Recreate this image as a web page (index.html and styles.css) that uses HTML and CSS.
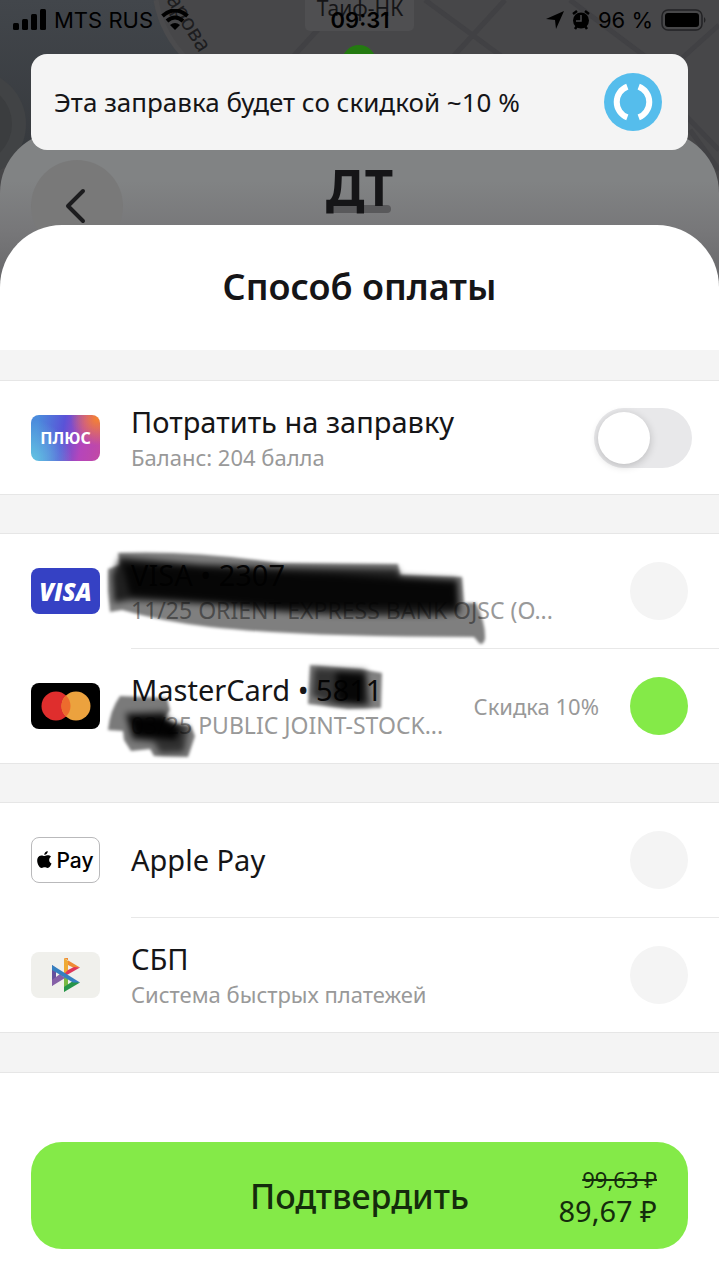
FILE: index.html
```html
<!DOCTYPE html>
<html lang="ru">
<head>
<meta charset="utf-8">
<meta name="viewport" content="width=device-width, initial-scale=1">
<title>Способ оплаты</title>
<link rel="stylesheet" href="styles.css">
</head>
<body>
<div class="screen">
  <div class="backdrop">
    <svg class="map" viewBox="0 0 719 300" preserveAspectRatio="xMidYMin slice" aria-hidden="true">
      <defs>
        <linearGradient id="water" x1="0" y1="0" x2="0" y2="1"><stop offset="0" stop-color="#42464b"/><stop offset="1" stop-color="#36393d"/></linearGradient>
      </defs>
      <rect width="719" height="300" fill="#474749"/>
      <path d="M0 0H156Q160 30 185 60L230 160H0Z" fill="url(#water)"/>
      <circle cx="-28" cy="124" r="54" fill="#414345"/>
      <circle cx="-28" cy="124" r="40" fill="#3b3d3f"/>
      <g fill="none" stroke="#414144" stroke-width="5">
        <path d="M345 0L290 60M425 0L520 70M505 0L450 60M570 0L650 60M719 25L680 60M680 110L719 150M690 130L719 170"/>
        <path d="M156 0Q162 35 188 60" stroke="#4b4b4d"/>
      </g>
      <rect x="305" y="-8" width="109" height="39" rx="5" fill="#4f4f51"/>
      <circle cx="359" cy="62" r="17" fill="#247a11"/>
      <text class="street" transform="translate(166 0) rotate(58)">арова</text>
      <text class="place" x="360" y="16" text-anchor="middle">Таиф-НК</text>
    </svg>
    <div class="previous">
      <div class="back"><svg viewBox="0 0 24 36" aria-hidden="true"><path d="M18 3L3 18L18 33"/></svg></div>
      <div class="fuel">ДТ</div>
    </div>
  </div>

  <header class="status">
    <div class="status-side">
      <svg class="signal" viewBox="0 0 33 22" aria-hidden="true"><rect y="14" width="6" height="7" rx="1.5"/><rect x="9" y="10" width="6" height="11" rx="1.5"/><rect x="18" y="5" width="6" height="16" rx="1.5"/><rect x="27" width="6" height="21" rx="1.5"/></svg>
      <span>MTS RUS</span>
      <svg class="wifi" viewBox="0 0 28 22" aria-hidden="true"><path d="M1.500 7Q14-4 26.500 7M6 12Q14 5 22 12" fill="none" stroke="#000" stroke-width="4"/><path d="M9 16Q14 12 19 16L14 21Z"/></svg>
    </div>
    <strong class="clock">09:31</strong>
    <div class="status-side status-end">
      <svg class="arrow" viewBox="0 0 18 18" aria-hidden="true"><path d="M18 0L10 18L9 9L0 8Z"/></svg>
      <svg class="alarm" viewBox="0 0 18 20" aria-hidden="true"><circle cx="9" cy="10.500" r="8"/><path d="M1 4L5 1M17 4L13 1M3 19L5 16M15 19L13 16" stroke="#000" stroke-width="2.500"/><path d="M9 5V11H4" fill="none" stroke="#4a4a4c" stroke-width="1.500"/></svg>
      <span>96 %</span>
      <svg class="battery" viewBox="0 0 46 22" aria-hidden="true"><rect x="1" y="1" width="40" height="20" rx="6" fill="none" stroke="#222224" stroke-width="1.500"/><rect x="4" y="4" width="34" height="14" rx="3"/><path d="M43 8Q46 11 43 14Z" fill="#222224"/></svg>
    </div>
  </header>

  <div class="toast">
    <p>Эта заправка будет со скидкой ~10 %</p>
    <svg viewBox="0 0 58 58" aria-hidden="true"><circle cx="29" cy="29" r="29" fill="#55bdec"/><path d="M23.300 13.600A16.500 16.500 0 0 0 23.300 44.400M34.700 13.600A16.500 16.500 0 0 1 34.700 44.400" fill="none" stroke="#fff" stroke-width="6"/></svg>
  </div>

  <form class="sheet">
    <h1>Способ оплаты</h1>

    <section class="group first">
      <label class="row plus-row">
        <span class="badge plus">ПЛЮС</span>
        <span class="body"><span class="name">Потратить на заправку</span><span class="note">Баланс: 204 балла</span></span>
        <input class="switch" type="checkbox" role="switch">
      </label>
    </section>

    <section class="group">
      <label class="row">
        <span class="badge visa">VISA</span>
        <span class="body"><span class="name">VISA • 2307</span><span class="note bank">11/25 ORIENT EXPRESS BANK OJSC (O...</span>
          <svg class="marker" viewBox="0 0 400 120" aria-hidden="true">
            <defs><filter id="soft"><feGaussianBlur stdDeviation="1.500"/></filter><filter id="softer"><feGaussianBlur stdDeviation="3"/></filter></defs>
            <path filter="url(#soft)" d="M18 14Q90 11 180 24L298 25L300 36L362 38L364 64L376 64Q386 85 385 100Q383 107 379 104L374 98Q200 98 110 88Q60 82 22 71L10 73L8 52L8 30L20 26Z" fill-opacity=".5"/>
            <g filter="url(#softer)">
              <path d="M20 18L100 25L180 28L298 30L300 37L358 40L360 74L340 76Q200 79 120 66L30 61L14 64L12 36Z" fill-opacity=".75"/>
              <path d="M22 24L140 32L240 36L356 44L357 68L180 68L60 58L30 56Z" fill-opacity=".8"/>
            </g>
          </svg>
        </span>
        <input class="radio" type="radio" name="method">
      </label>
      <label class="row">
        <span class="badge mastercard"><svg viewBox="0 0 50 30" aria-hidden="true"><circle cx="15" cy="15" r="14.500" fill="#df2e2d"/><circle cx="35" cy="15" r="14.500" fill="#eca23e"/><path d="M25 4.500A14.500 14.500 0 0 1 25 25.500A14.500 14.500 0 0 1 25 4.500Z" fill="#ed6b2d"/></svg></span>
        <span class="body"><span class="name">MasterCard • 5811</span><span class="note bank">03/25 PUBLIC JOINT-STOCK...</span>
          <svg class="marker" viewBox="0 0 400 120" aria-hidden="true">
            <g filter="url(#soft)">
              <path d="M210 11L260 15L282 19L281 54L248 55L208 50Z" fill-opacity=".5"/>
              <path d="M20 42L67 44L70 56L62 68L91 72L95 82L88 103L54 102L50 95L31 97L24 86L23 77L8 76Q10 56 20 42Z" fill-opacity=".52"/>
            </g>
            <g filter="url(#softer)">
              <path d="M214 14L266 16L270 52L232 50L212 42Z" fill-opacity=".6"/>
              <path d="M236 18L265 20L264 50L236 48Z" fill-opacity=".85"/>
              <path d="M25 59L66 57L69 67L88 72L84 98L60 99L54 88L32 86Z" fill-opacity=".6"/>
              <path d="M28 62L64 62L80 74L76 86L34 82Z" fill-opacity=".95"/>
            </g>
          </svg>
        </span>
        <span class="discount">Скидка 10%</span>
        <input class="radio" type="radio" name="method" checked>
      </label>
    </section>

    <section class="group">
      <label class="row">
        <span class="badge apple"><svg viewBox="0 0 16 19" aria-hidden="true"><path d="M8 5.200C6.800 5.200 6 4.500 4.500 4.600C1.500 4.800 0 7.300 .2 10.500C.4 14 2.800 18 5 18C6.200 18 6.900 17.300 8.200 17.300C9.500 17.300 10 18 11.300 18C13.300 18 14.800 15.200 15.500 13.200C13.900 12.500 13 11.300 13 9.500C13 7.900 13.800 6.800 15 6.100C14.100 4.900 12.800 4.500 11.700 4.500C10.200 4.500 9.200 5.200 8 5.200ZM7.800 4.200C7.600 2 9.500 .2 11.400 0C11.700 2.200 9.800 4.200 7.800 4.200Z"/></svg>Pay</span>
        <span class="body"><span class="name">Apple Pay</span></span>
        <input class="radio" type="radio" name="method">
      </label>
      <label class="row">
        <span class="badge sbp">
          <svg viewBox="0 0 28 34" aria-hidden="true">
            <path d="M12 0L28 9.500L22 10L16 7V0Z" fill="#ef8b35"/><path d="M12 0L16 3V15L12 16Z" fill="#efaa35"/><path d="M28 9.500L14 17.500L12 16L16 12L22 9Z" fill="#df3659"/>
            <path d="M12 17L16 19V28L12 34Z" fill="#78b943"/><path d="M12 34L28 24.500L21 23L12 29Z" fill="#26954a"/>
            <path d="M0 7L4 10V22L0 28Z" fill="#65509d"/><path d="M0 28L13 20L8 16L0 22Z" fill="#8560a7"/>
            <path d="M0 7L28 24.500H21L0 12Z" fill="#357fc0"/>
          </svg>
        </span>
        <span class="body"><span class="name">СБП</span><span class="note">Система быстрых платежей</span></span>
        <input class="radio" type="radio" name="method">
      </label>
    </section>

    <footer class="footer">
      <button class="confirm" type="button">
        <span class="confirm-label">Подтвердить</span>
        <span class="prices"><s>99,63 ₽</s><span>89,67 ₽</span></span>
      </button>
    </footer>
  </form>
</div>
</body>
</html>
```
FILE: styles.css
```css
* { box-sizing: border-box; }

body {
  margin: 0;
  background: #fff;
  color: #151517;
  font-family: "Noto Sans", sans-serif;
}

.screen { position: relative; isolation: isolate; overflow: hidden; }

.backdrop {
  position: absolute;
  inset: 0 0 auto;
  height: 300px;
  z-index: -1;
  background: #464648;
}
.map { display: block; width: 100%; height: 100%; }
.street { font-size: 22px; fill: #1d1d1f; }
.place { font-size: 21px; fill: #151517; }

.previous {
  position: absolute;
  inset: 131px 0 0;
  padding: 29px 31px;
  border-radius: 62px 62px 0 0;
  background: linear-gradient(#818384 0, #818384 50px, #777779 100px, #68686a 150px);
}
.back {
  display: flex;
  align-items: center;
  justify-content: center;
  width: 92px;
  height: 92px;
  border-radius: 50%;
  background: #797979;
}
.back svg { width: 24px; height: 36px; fill: none; stroke: #1c1c1e; stroke-width: 4; stroke-linecap: round; stroke-linejoin: round; }
.fuel {
  position: absolute;
  isolation: isolate;
  inset: 20px 0 auto;
  text-align: center;
  font-size: 50px;
  line-height: 72px;
  font-weight: 700;
}
.fuel::before {
  content: "";
  position: absolute;
  z-index: -1;
  top: 54px;
  left: calc(50% - 31px);
  width: 62px;
  height: 8px;
  border-radius: 4px;
  background: #59595b;
}

.status {
  display: grid;
  grid-template-columns: 1fr auto 1fr;
  align-items: center;
  height: 40px;
  padding: 0 12px 0 13px;
  color: #000;
  font-family: Inter, sans-serif;
  font-size: 22px;
}
.status-side { display: flex; align-items: center; gap: 8px; white-space: nowrap; }
.status-end { justify-content: flex-end; }
.clock { font-weight: 600; }
.signal { width: 33px; height: 22px; }
.wifi { width: 28px; height: 22px; }
.arrow { width: 18px; height: 18px; }
.alarm { width: 18px; height: 20px; }
.battery { width: 46px; height: 22px; }

.toast {
  display: flex;
  align-items: center;
  justify-content: space-between;
  min-height: 96px;
  margin: 14px 31px 0;
  padding: 0 26px 0 23px;
  border-radius: 16px;
  background: #f4f4f4;
}
.toast p { margin: 0; font-size: 26px; line-height: 36px; }
.toast svg { width: 58px; height: 58px; }

.sheet {
  margin-top: 75px;
  border-radius: 62px 62px 0 0;
  background: #fff;
  overflow: hidden;
}
h1 {
  margin: 0;
  padding: 36px 31px 37px;
  text-align: center;
  font-size: 36px;
  line-height: 52px;
  font-weight: 600;
}

.group { border-top: 38px solid #f4f4f4; }
.group.first { border-top-width: 30px; }
.group .row:first-child { border-top: 1px solid #e6e6e6; }
.group .row:last-child { border-bottom: 1px solid #e6e6e6; }

.row {
  display: flex;
  align-items: center;
  gap: 31px;
  min-height: 115px;
  padding: 0 31px;
  position: relative;
}
.row + .row { min-height: 116px; }
.row + .row::before {
  content: "";
  position: absolute;
  top: 0;
  left: 131px;
  right: 0;
  height: 1px;
  background: #e8e8e8;
}
.plus-row { padding-right: 27px; }

.badge {
  display: flex;
  flex: none;
  align-items: center;
  justify-content: center;
  width: 69px;
  height: 46px;
  border-radius: 8px;
  color: #fff;
}
.plus {
  background:
    radial-gradient(circle at 96% 8%, #f58330 0, #f5833000 34%),
    radial-gradient(circle at 0 100%, #63c5e2 0, #63c5e200 50%),
    linear-gradient(100deg, #4b8bdc 10%, #5a53d7 45%, #b545bb 72%, #c249a4);
  font-size: 16px;
  font-weight: 700;
}
.visa { background: #3541c4; font-family: "Open Sans", sans-serif; font-size: 24px; font-weight: 800; font-style: italic; }
.mastercard { background: #000; }
.mastercard svg { width: 50px; height: 30px; }
.apple { gap: 4px; border: 1px solid #b9b9bb; color: #000; font-family: Inter, sans-serif; font-size: 21px; font-weight: 500; }
.apple svg { width: 15px; height: 18px; }
.sbp { background: #f0f0ec; }
.sbp svg { width: 28px; height: 34px; }

.body { flex: 1; display: flex; flex-direction: column; position: relative; min-width: 0; white-space: nowrap; }
.name { font-size: 29px; line-height: 38px; }
.note { font-size: 22px; line-height: 32px; color: #999; }
.bank { font-size: 23px; }
.discount { font-size: 22px; line-height: 32px; color: #999; }
.marker {
  position: absolute;
  top: -17px;
  left: -31px;
  width: 400px;
  height: 120px;
  overflow: visible;
  pointer-events: none;
}

input { appearance: none; flex: none; margin: 0; }
.radio { width: 58px; height: 58px; border-radius: 50%; background: #f4f4f4; }
.radio:checked { background: #84ea48; }
.switch {
  display: flex;
  align-items: center;
  width: 98px;
  height: 60px;
  padding: 0 4px;
  border-radius: 30px;
  background: #e8e8ea;
}
.switch::before {
  content: "";
  width: 52px;
  height: 52px;
  border-radius: 50%;
  background: #fff;
  box-shadow: 0 2px 8px #0003;
}
.switch:checked { justify-content: flex-end; background: #84ea48; }

.footer { padding: 70px 31px 31px; border-top: 39px solid #f4f4f4; box-shadow: inset 0 1px #e6e6e6; }
.confirm {
  display: grid;
  grid-template-columns: 1fr auto 1fr;
  align-items: center;
  width: 100%;
  min-height: 107px;
  padding: 0 31px;
  border: 0;
  border-radius: 31px;
  background: #84ea48;
  color: #142c0c;
  font-family: inherit;
}
.confirm-label { grid-column: 2; font-size: 34px; line-height: 44px; font-weight: 500; }
.prices { display: flex; flex-direction: column; align-items: flex-end; font-size: 29px; line-height: 34px; }
.prices s { font-size: 22px; line-height: 30px; }
```
